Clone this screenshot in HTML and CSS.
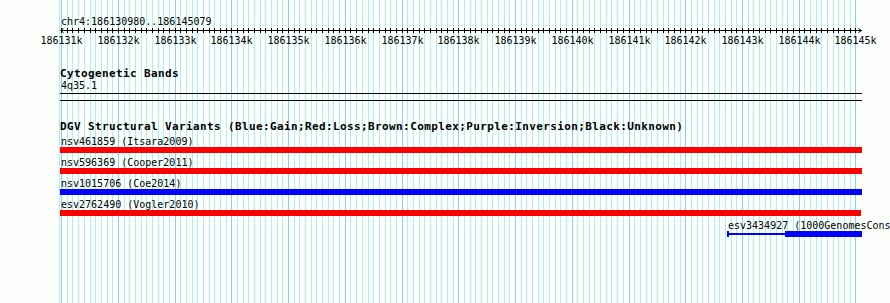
FILE: index.html
```html
<!DOCTYPE html>
<html lang="en">

<head>
    <meta charset="UTF-8">
    <meta name="viewport" content="width=device-width, initial-scale=1.0">
    <title>chr4:186130980..186145079</title>
    <link rel="stylesheet" href="styles.css">
</head>

<body>
    <div class="panel">
        <!-- 그리드는 스크립트로 그림 -->
        <svg id="grid" class="grid" width="890" height="303"></svg>

        <div class="ruler">
            <div class="ruler-label">chr4:186130980..186145079</div>
            <svg id="scale" class="scale" width="890" height="19"></svg>
        </div>

        <div class="track cyto">
            <h2 class="track-title">Cytogenetic Bands</h2>
            <div class="feature-label">4q35.1</div>
            <div class="band"></div>
        </div>

        <div class="track dgv">
            <h2 class="track-title">DGV Structural Variants (Blue:Gain;Red:Loss;Brown:Complex;Purple:Inversion;Black:Unknown)</h2>
            <div class="feature-list">
                <div class="feature">
                    <div class="feature-label">nsv461859 (Itsara2009)</div>
                    <div class="bar loss"></div>
                </div>
                <div class="feature">
                    <div class="feature-label">nsv596369 (Cooper2011)</div>
                    <div class="bar loss"></div>
                </div>
                <div class="feature">
                    <div class="feature-label">nsv1015706 (Coe2014)</div>
                    <div class="bar gain"></div>
                </div>
                <div class="feature">
                    <div class="feature-label">esv2762490 (Vogler2010)</div>
                    <div class="bar loss" style="width: 801px;"></div>
                </div>
                <div class="feature">
                    <div class="feature-label" style="margin-left: 728px;">esv3434927 (1000GenomesConsortiumPilotProject)</div>
                    <svg class="split" style="margin-left: 727px;" width="135" height="6">
                        <rect x="0" y="0" width="2" height="6" fill="#0000ff" />
                        <rect x="0" y="2" width="58" height="2" fill="#0000ff" />
                        <rect x="58" y="0" width="77" height="6" fill="#0000ff" />
                    </svg>
                </div>
            </div>
        </div>
    </div>

    <script>
        // 보이는 구간
        const start = 186130980;
        const end = 186145079;
        const left = 60;
        const width = 800;

        const toX = (bp) => Math.round(left + (bp - start) * width / (end - start + 1)) + 0.5;

        let gridLines = `<line class="minor" x1="59.5" y1="0" x2="59.5" y2="303" />`;
        let ticks = "";
        let labels = "";

        for (let bp = 186131000; bp <= end; bp += 100) {
            const x = toX(bp);
            const major = bp % 1000 === 0;
            gridLines += `<line class="${major ? "major" : "minor"}" x1="${x}" y1="0" x2="${x}" y2="303" />`;
            ticks += `<line x1="${x}" y1="0" x2="${x}" y2="5" />`;
            if (major) {
                labels += `<text x="${x}" y="16">${bp / 1000}k</text>`;
            }
        }

        document.getElementById("grid").innerHTML = gridLines;

        // 눈금자
        document.getElementById("scale").innerHTML = `
            <g class="ticks">
                <line x1="60.5" y1="2.5" x2="861.5" y2="2.5" />
                ${ticks}
                <path d="M63.5 0.5 L60.5 2.5 L63.5 4.5" />
                <path d="M858.5 0.5 L861.5 2.5 L858.5 4.5" />
            </g>
            <g class="tick-labels">${labels}</g>
        `;
    </script>
</body>

</html>
```

FILE: styles.css
```css
body {
    margin: 0;
    padding: 0;
    background-color: #fdfffd;
    font-family: "DejaVu Sans Mono", monospace;
    color: #000;
}

.panel {
    position: relative;
    z-index: 0;
    width: 890px;
    height: 303px;
    overflow: hidden;
}

.grid {
    position: absolute;
    top: 0;
    left: 0;
    z-index: -1;
    shape-rendering: crispEdges;
}

.grid .minor {
    stroke: #afeeee;
    stroke-width: 1;
}

.grid .major {
    stroke: #87cefa;
    stroke-width: 1;
}

.ruler {
    padding-top: 16px;
}

.ruler-label {
    margin-left: 61px;
    font-size: 10px;
    line-height: 12px;
    white-space: nowrap;
}

.scale {
    display: block;
}

.scale .ticks line,
.scale .ticks path {
    stroke: #000;
    stroke-width: 1;
    fill: none;
}

.scale .ticks line {
    shape-rendering: crispEdges;
}

.scale .tick-labels text {
    font-family: "DejaVu Sans Mono", monospace;
    font-size: 10px;
    text-anchor: middle;
    fill: #000;
}

.track-title {
    margin: 0 0 0 60px;
    font-size: 11px;
    font-weight: bold;
    letter-spacing: 0.38px;
    line-height: 12px;
    white-space: nowrap;
}

.feature-label {
    margin-left: 61px;
    font-size: 10px;
    line-height: 11px;
    white-space: nowrap;
}

.cyto {
    margin-top: 21px;
}

.cyto .feature-label {
    line-height: 12px;
}

.band {
    margin: 1px 0 0 60px;
    width: 802px;
    height: 8px;
    box-sizing: border-box;
    border-top: 1px solid #000;
    border-bottom: 1px solid #000;
}

.dgv {
    margin-top: 20px;
}

.dgv .track-title {
    margin-bottom: 3px;
}

.feature-list {
    display: flex;
    flex-direction: column;
    gap: 4px;
}

.bar {
    margin-left: 60px;
    width: 802px;
    height: 6px;
}

.bar.loss {
    background-color: #ff0000;
}

.bar.gain {
    background-color: #0000ff;
}

.split {
    display: block;
}
```
